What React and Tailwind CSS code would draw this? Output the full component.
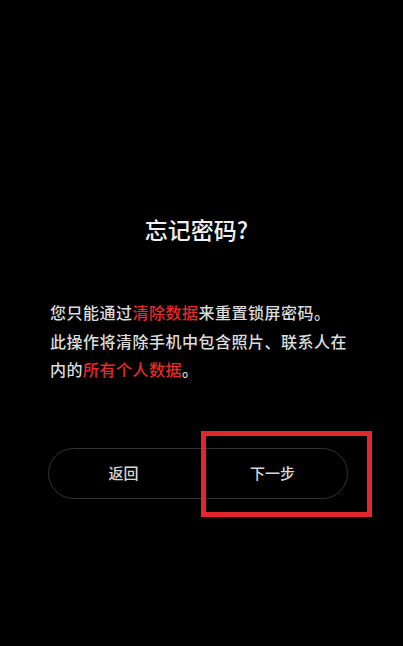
export default function App() {
  return (
    <div
      className="w-[403px] h-[646px] bg-black text-[#e6e6e6] flex flex-col"
      style={{ fontFamily: '"Noto Sans CJK SC", "Noto Sans", sans-serif' }}
    >
      <h1 className="mt-[214px] pr-[10px] text-center text-[23px] leading-[30px] font-medium text-[#f0f0f0]">
        忘记密码?
      </h1>

      <p className="mt-[54px] px-[50px] text-[16px] leading-[28.5px] tracking-[0.5px] font-medium text-[#dcdcdc]">
        您只能通过<span className="text-[#e32b2b]">清除数据</span>来重置锁屏密码。
        <br />
        此操作将清除手机中包含照片、联系人在
        <br />
        内的<span className="text-[#e32b2b]">所有个人数据</span>。
      </p>

      <div className="relative mt-[64px] mx-[48px] w-[300px] h-[51px] rounded-full border border-[#333333] flex">
        <button className="flex-1 text-[15px] font-medium text-[#d8d8d8]">返回</button>
        <button className="flex-1 text-[15px] font-medium text-[#d8d8d8]">下一步</button>
        <div className="absolute left-[152px] top-[-18px] w-[171px] h-[86px] border-[5px] border-[#e0262e]" />
      </div>
    </div>
  );
}
